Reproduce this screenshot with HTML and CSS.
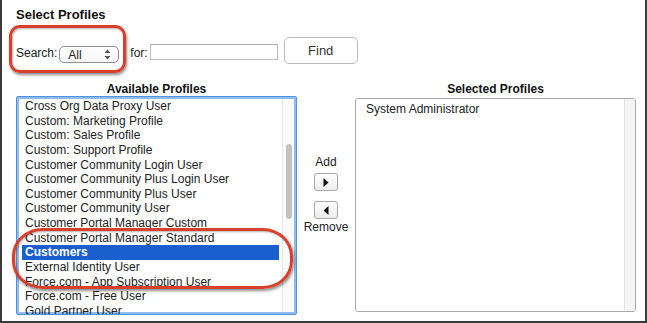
FILE: index.html
```html
<!DOCTYPE html>
<html>
<head>
<meta charset="utf-8">
<link rel="stylesheet" href="styles.css">
</head>
<body>
<div class="frame">
  <div class="title">Select Profiles</div>
  <div class="search-row">
    <span class="lbl">Search:</span>
    <div class="select"><span>All</span>
      <svg class="arrows" width="7" height="11" viewBox="0 0 7 11"><path d="M3.5 0.5 L6.5 4 L0.5 4 Z M3.5 10.5 L6.5 7 L0.5 7 Z" fill="#555"/></svg>
    </div>
    <span class="lbl for">for:</span>
    <div class="input"></div>
    <div class="find">Find</div>
  </div>
  <div class="columns">
    <div class="col">
      <div class="head">Available Profiles</div>
      <div class="listbox focus">
        <div class="items">
          <div class="item">Cross Org Data Proxy User</div>
          <div class="item">Custom: Marketing Profile</div>
          <div class="item">Custom: Sales Profile</div>
          <div class="item">Custom: Support Profile</div>
          <div class="item">Customer Community Login User</div>
          <div class="item">Customer Community Plus Login User</div>
          <div class="item">Customer Community Plus User</div>
          <div class="item">Customer Community User</div>
          <div class="item">Customer Portal Manager Custom</div>
          <div class="item">Customer Portal Manager Standard</div>
          <div class="item sel">Customers</div>
          <div class="item">External Identity User</div>
          <div class="item">Force.com - App Subscription User</div>
          <div class="item">Force.com - Free User</div>
          <div class="item">Gold Partner User</div>
        </div>
        <div class="track"><div class="thumb"></div></div>
      </div>
    </div>
    <div class="mid">
      <div class="midlbl">Add</div>
      <div class="abtn"><svg width="6" height="9" viewBox="0 0 6 9"><path d="M0.5 0 L5.5 4.5 L0.5 9 Z" fill="#111"/></svg></div>
      <div class="abtn second"><svg width="6" height="9" viewBox="0 0 6 9"><path d="M5.5 0 L0.5 4.5 L5.5 9 Z" fill="#111"/></svg></div>
      <div class="midlbl">Remove</div>
    </div>
    <div class="col">
      <div class="head">Selected Profiles</div>
      <div class="listbox plain">
        <div class="items">
          <div class="item">System Administrator</div>
        </div>
        <div class="track light"></div>
      </div>
    </div>
  </div>
  <div class="mark mark-search"></div>
  <div class="mark mark-customers"></div>
</div>
</body>
</html>
```

FILE: styles.css
```css
* { box-sizing: border-box; }
html, body { margin: 0; padding: 0; background: #fff; }
body { font-family: "Liberation Sans", Arial, sans-serif; color: #222; }
.frame {
  position: relative;
  width: 647px;
  height: 323px;
  border-left: 2px solid #3a3a3a;
  border-right: 2px solid #3a3a3a;
  border-bottom: 2px solid #3a3a3a;
  overflow: hidden;
  padding-left: 14px;
}
.title {
  font-weight: bold;
  font-size: 13px;
  padding-top: 7px;
  height: 21px;
  color: #111;
}
.search-row {
  display: flex;
  align-items: center;
  height: 27px;
  margin-top: 18px;
  font-size: 12px;
}
.lbl { color: #222; }
.select {
  margin-left: 2px;
  width: 60px;
  height: 17px;
  border: 1px solid #8f8f8f;
  border-radius: 5px;
  display: flex;
  align-items: center;
  justify-content: space-between;
  padding: 0 7px 0 8px;
  font-size: 12px;
  margin-top: 4px;
  background: linear-gradient(#fff, #f6f6f6);
}
.for { margin-left: 11px; margin-top: 1px; }
.input {
  margin-left: 2px;
  width: 128px;
  height: 16px;
  border: 1px solid #bdbdbd;
  border-top-color: #a9a9a9;
  margin-top: -2px;
}
.find {
  margin-left: 6px;
  width: 74px;
  height: 27px;
  border: 1px solid #bcbcbc;
  border-radius: 5px;
  display: flex;
  align-items: center;
  justify-content: center;
  font-size: 13px;
  color: #333;
  background: #fff;
  margin-top: -5px;
}
.columns {
  display: grid;
  grid-template-columns: 281px 58px 281px;
  margin-top: 12px;
}
.head {
  font-weight: bold;
  font-size: 12px;
  text-align: center;
  height: 16px;
  line-height: 16px;
  margin-top: 3px;
  color: #111;
}
.col { display: flex; flex-direction: column; }
.listbox {
  position: relative;
  display: flex;
  font-size: 12px;
  overflow: hidden;
}
.listbox.focus {
  margin-top: -1px;
  height: 219px;
  border: 1px solid #4e93df;
  box-shadow: 0 0 0 2px #8fbcef inset;
  border-radius: 2px;
  padding: 2px 2px 2px 5px;
}
.listbox.plain {
  margin-top: 1px;
  height: 214px;
  border: 1px solid #a9a9a9;
  border-radius: 3px;
  padding: 3px 0 0 7px;
}
.items { flex: 1; }
.item {
  height: 14.65px;
  line-height: 14.65px;
  padding-left: 3px;
  white-space: nowrap;
  color: #222;
}
.item.sel {
  background: #1b5fcf;
  color: #fff;
  font-weight: bold;
  margin-right: 3px;
}
.track {
  width: 12px;
  border-left: 1px solid #e6e6e6;
  position: relative;
  background: #fafafa;
}
.thumb {
  position: absolute;
  left: 3px;
  top: 45px;
  width: 6px;
  height: 75px;
  border-radius: 3px;
  background: #c2c2c2;
}
.track.light {
  width: 11px;
  background: #f4f4f4;
  border-left: 1px solid #e3e3e3;
  margin-top: -3px;
}
.mid {
  display: flex;
  flex-direction: column;
  align-items: center;
  padding-top: 76px;
  font-size: 12px;
}
.midlbl { height: 16px; line-height: 16px; color: #222; }
.abtn {
  width: 24px;
  height: 18px;
  border: 1px solid #a8a8a8;
  border-radius: 3px;
  background: linear-gradient(#fff, #ececec);
  display: flex;
  align-items: center;
  justify-content: center;
  margin-top: 3px;
}
.abtn.second { margin-top: 10px; }
.mark {
  position: absolute;
  border: 3px solid #d8402c;
  box-shadow: 1px 2px 3px rgba(0,0,0,0.45), inset 1px 1px 2px rgba(0,0,0,0.3);
}
.mark-search {
  left: 7px;
  top: 25px;
  width: 117px;
  height: 48px;
  border-radius: 11px;
}
.mark-customers {
  left: 10px;
  top: 228px;
  width: 281px;
  height: 61px;
  border-radius: 30px / 28px;
}
```
